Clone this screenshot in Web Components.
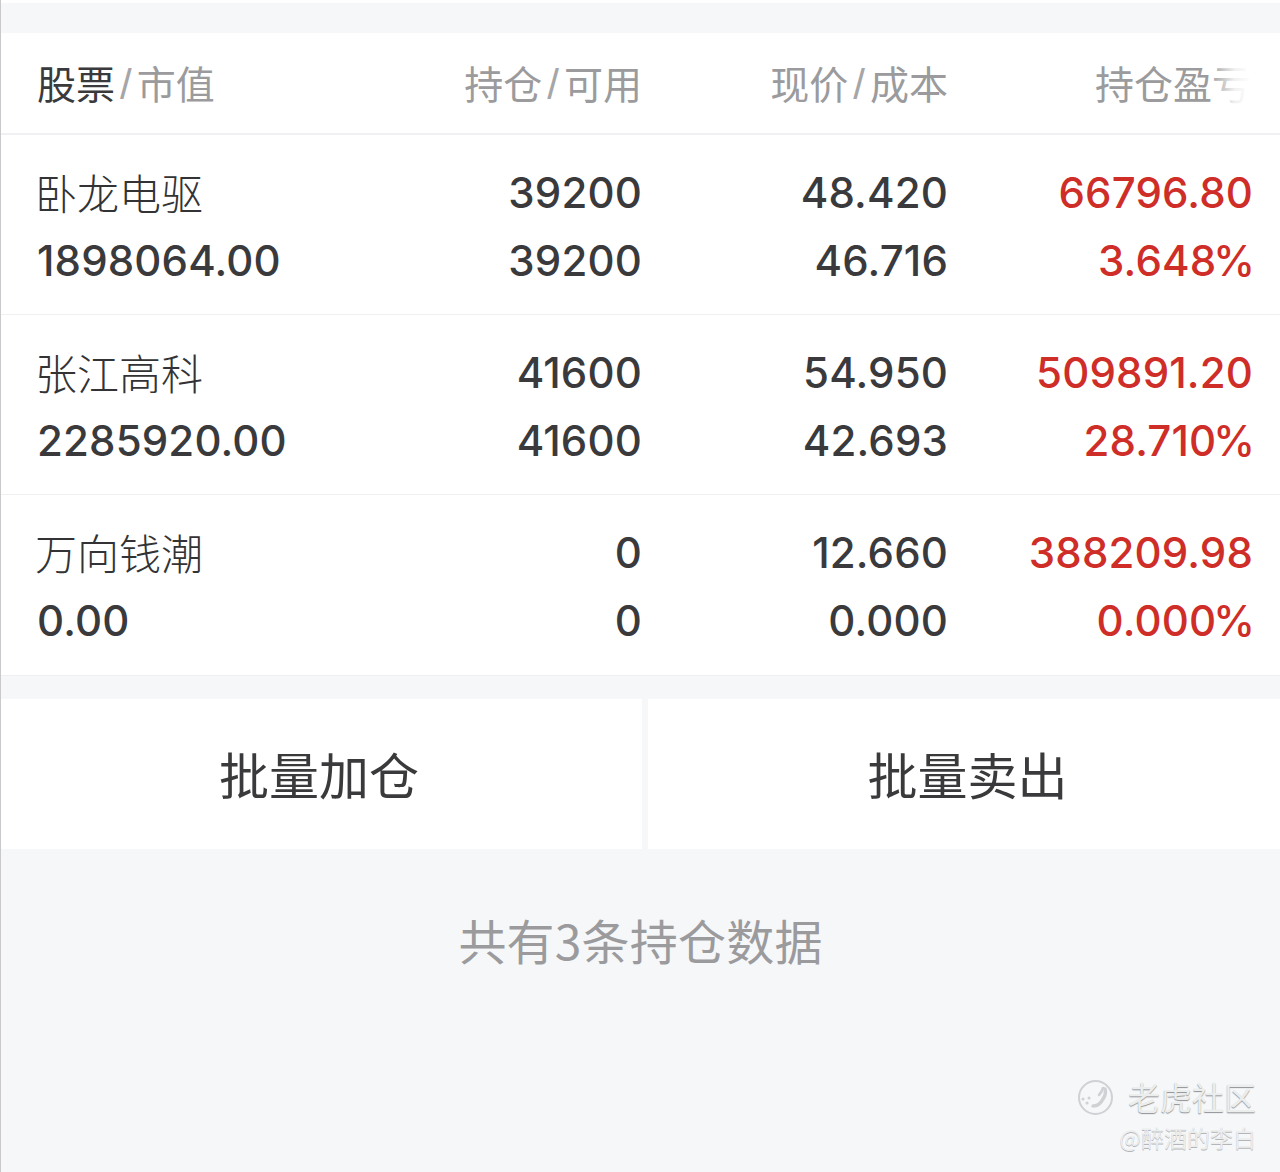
<!DOCTYPE html>
<html lang="zh">
<head>
<meta charset="utf-8">
<title>持仓</title>
<style>
  html { height: 100%; }
  body {
    margin: 0;
    height: 100%;
    box-sizing: border-box;
    border-left: 1px solid #c9c9cc;
    background: linear-gradient(#fff 3px, #f6f7f9 3px);
    font-family: Inter, "Noto Sans CJK SC", sans-serif;
    overflow: hidden;
  }
</style>
</head>
<body>
<position-table>
  <position-header></position-header>
  <position-row name="卧龙电驱" value="1898064.00" qty="39200" avail="39200" price="48.420" cost="46.716" pl="66796.80" pct="3.648"></position-row>
  <position-row name="张江高科" value="2285920.00" qty="41600" avail="41600" price="54.950" cost="42.693" pl="509891.20" pct="28.710"></position-row>
  <position-row name="万向钱潮" value="0.00" qty="0" avail="0" price="12.660" cost="0.000" pl="388209.98" pct="0.000"></position-row>
</position-table>
<batch-actions></batch-actions>
<position-count>共有3条持仓数据</position-count>
<community-mark></community-mark>

<script>
const COLUMNS = 'grid-template-columns: 300px 305px 306px 305px;';
const CJK = '"Noto Sans CJK SC", sans-serif';

class PositionTable extends HTMLElement {
    constructor() {
        super();
        this.attachShadow({ mode: 'open' }).innerHTML = `
            <style>
                :host {
                    display: block;
                    padding-top: 33px;
                    background: linear-gradient(transparent 33px, #fff 33px);
                    border-bottom: 1px solid #eeeff1;
                }
            </style>
            <slot></slot>`;
    }
}

class PositionHeader extends HTMLElement {
    constructor() {
        super();
        this.attachShadow({ mode: 'open' }).innerHTML = `
            <style>
                :host {
                    display: grid;
                    ${COLUMNS}
                    box-sizing: border-box;
                    height: 102px;
                    padding: 0 27px 2px 36px;
                    align-items: center;
                    border-bottom: 2px solid #f0f0f2;
                    position: relative;
                    font: 400 39px/1 ${CJK};
                    color: #9b9b9d;
                }
                div { text-align: right; white-space: nowrap; }
                div.first { text-align: left; }
                div.last { padding-right: 2px; }
                b { font-weight: 400; color: #3a3a3c; }
                i { font: 300 42px/0 "Liberation Sans", sans-serif; margin: 0 5px; color: #a6a6a8; }
                .fade {
                    position: absolute;
                    top: 0; bottom: 0; right: 0;
                    width: 70px;
                    background: linear-gradient(90deg, rgba(255,255,255,0) 0%, rgba(255,255,255,.85) 35%, #fff 60%);
                }
            </style>
            <div class="first"><b>股票</b><i>/</i>市值</div>
            <div>持仓<i>/</i>可用</div>
            <div>现价<i>/</i>成本</div>
            <div class="last">持仓盈亏</div>
            <span class="fade"></span>`;
    }
}

class PositionRow extends HTMLElement {
    connectedCallback() {
        const a = n => this.getAttribute(n);
        this.attachShadow({ mode: 'open' }).innerHTML = `
            <style>
                :host {
                    display: grid;
                    ${COLUMNS}
                    grid-auto-rows: 68px;
                    box-sizing: border-box;
                    height: 180px;
                    padding: 24px 27px 0 36px;
                    border-bottom: 1px solid #f0f0f2;
                    font: 500 42px/68px Inter, ${CJK};
                    letter-spacing: .15px;
                    color: #3a3a3c;
                    white-space: nowrap;
                    text-align: right;
                }
                :host(:last-child) { border-bottom: 0; }
                .name { font: 300 42px/66px ${CJK}; letter-spacing: 0; color: #333335; text-align: left; margin-left: -2px; }
                .left { text-align: left; }
                .red { color: #cf2d27; }
                /* Inter's percent sign runs wide */
                .pc { letter-spacing: 0; margin: 0 -2px 0 -3px; }
            </style>
            <div class="name">${a('name')}</div>
            <div>${a('qty')}</div>
            <div>${a('price')}</div>
            <div class="red">${a('pl')}</div>
            <div class="left">${a('value')}</div>
            <div>${a('avail')}</div>
            <div>${a('cost')}</div>
            <div class="red">${a('pct')}<span class="pc">%</span></div>`;
    }
}

class BatchActions extends HTMLElement {
    constructor() {
        super();
        this.attachShadow({ mode: 'open' }).innerHTML = `
            <style>
                :host {
                    display: flex;
                    gap: 6px;
                    margin-top: 23px;
                    height: 150px;
                }
                div {
                    box-sizing: border-box;
                    display: flex;
                    align-items: center;
                    justify-content: center;
                    padding-bottom: 3px;
                    background: #fff;
                    font: 400 50px/1 ${CJK};
                    color: #3a3a3c;
                }
                .add { flex: 0 0 641px; padding-right: 5px; }
                .sell { flex: 1 1 0; padding-left: 7px; }
            </style>
            <div class="add">批量加仓</div>
            <div class="sell">批量卖出</div>`;
    }
}

class PositionCount extends HTMLElement {
    constructor() {
        super();
        this.attachShadow({ mode: 'open' }).innerHTML = `
            <style>
                :host {
                    display: block;
                    padding-top: 60px;
                    text-align: center;
                    font: 400 48px/60px ${CJK};
                    letter-spacing: .2px;
                    color: #9b9b9d;
                }
            </style>
            <slot></slot>`;
    }
}

class CommunityMark extends HTMLElement {
    constructor() {
        super();
        this.attachShadow({ mode: 'open' }).innerHTML = `
            <style>
                :host {
                    position: absolute;
                    right: 24px;
                    top: 1074px;
                    display: flex;
                    flex-direction: column;
                    align-items: flex-end;
                    gap: 5px;
                    color: #eceded;
                    font-family: ${CJK};
                    text-shadow: 0 1px 1px #8f9194;
                }
                .brand { display: flex; align-items: center; gap: 14px; font: 400 32px/44px ${CJK}; }
                .user { font: 400 23px/28px ${CJK}; text-shadow: 0 1px 0 #b4b6b9; }
                svg { display: block; margin-top: 2px; }
            </style>
            <div class="brand">
                <svg width="37" height="37" viewBox="0 0 37 37" fill="none" stroke="#cfd1d4">
                    <circle cx="18.5" cy="18.5" r="16.5" stroke-width="2"/>
                    <path d="M16 27c5 0 8-3 10-7 2-3 3-7 2-10" stroke-width="3.5" stroke-linecap="round"/>
                    <path d="M26 9c-1 3-2 5-4 7" stroke-width="2.5" stroke-linecap="round"/>
                    <path d="M6 20h.1M10 24h.1M12 19h.1" stroke-width="3" stroke-linecap="round"/>
                </svg>
                <span>老虎社区</span>
            </div>
            <div class="user">@醉酒的李白</div>`;
    }
}

customElements.define('position-table', PositionTable);
customElements.define('position-header', PositionHeader);
customElements.define('position-row', PositionRow);
customElements.define('batch-actions', BatchActions);
customElements.define('position-count', PositionCount);
customElements.define('community-mark', CommunityMark);
</script>
</body>
</html>
